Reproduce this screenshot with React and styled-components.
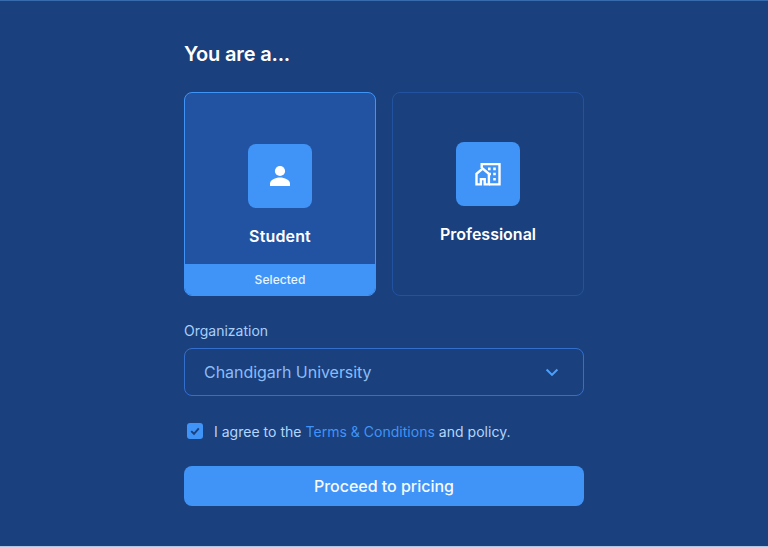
import React from "react";
import styled, { createGlobalStyle } from "styled-components";

const GlobalStyle = createGlobalStyle`
  * { box-sizing: border-box; }
  body { margin: 0; background: #1a407d; font-family: Inter, sans-serif; }
`;

const Page = styled.main`
  height: 547px;
  padding-top: 39px;
  display: flex;
  justify-content: center;
  background: #1a407d;
  border-top: 1px solid #386bae;
  border-bottom: 1px solid #b4c6e2;
`;

const Form = styled.form`
  width: 400px;
  display: flex;
  flex-direction: column;
`;

const Title = styled.h1`
  margin: 0;
  font-size: 20px;
  line-height: 28px;
  font-weight: 600;
  letter-spacing: -0.18px;
  color: #fff;
`;

const Cards = styled.div`
  display: grid;
  grid-template-columns: 1fr 1fr;
  gap: 16px;
  margin-top: 24px;
`;

const Card = styled.div`
  height: 204px;
  display: flex;
  flex-direction: column;
  border: 1px solid ${(p) => (p.$selected ? "#4094f7" : "#2253a0")};
  border-radius: 8px;
  background: ${(p) => (p.$selected ? "#2253a2" : "transparent")};
  overflow: hidden;
`;

const CardBody = styled.div`
  flex: 1;
  display: flex;
  flex-direction: column;
  align-items: center;
  padding-top: ${(p) => (p.$selected ? 51 : 49)}px;
`;

const IconTile = styled.div`
  width: 64px;
  height: 64px;
  display: grid;
  place-items: center;
  border-radius: 8px;
  background: #4094f7;
  svg { display: block; }
`;

const CardLabel = styled.div`
  margin-top: 16px;
  font-size: 16px;
  line-height: 24px;
  font-weight: 600;
  letter-spacing: ${(p) => (p.$wide ? "0.15px" : "0")};
  color: #fff;
`;

const SelectedBar = styled.div`
  height: 31px;
  line-height: 31px;
  text-align: center;
  font-size: 12px;
  font-weight: 500;
  letter-spacing: 0.08px;
  color: #eaf4ff;
  background: #4094f7;
`;

const FieldLabel = styled.label`
  margin-top: 24px;
  padding-top: 1px;
  font-size: 14px;
  line-height: 20px;
  color: #a9cffb;
`;

const Select = styled.div`
  height: 48px;
  margin-top: 7px;
  padding: 0 19px;
  display: flex;
  align-items: center;
  justify-content: space-between;
  border: 1px solid #356fcd;
  border-radius: 8px;
  font-size: 16px;
  letter-spacing: -0.04px;
  color: #8abcf8;
`;

const Agreement = styled.div`
  margin-top: 25px;
  padding-left: 3px;
  height: 20px;
  display: flex;
  align-items: center;
  gap: 11px;
  font-size: 14px;
  line-height: 20px;
  color: #b5d6fc;
`;

const AgreementText = styled.span`
  padding-top: 1px;
  letter-spacing: 0.02px;
`;

const Checkbox = styled.span`
  width: 16px;
  height: 16px;
  border-radius: 3px;
  background: #4094f7;
  svg { display: block; }
`;

const TermsLink = styled.a`
  color: #4094f7;
`;

const Submit = styled.button`
  height: 40px;
  margin-top: 25px;
  padding: 0;
  border: 0;
  border-radius: 8px;
  background: #4094f7;
  color: #f5faff;
  font: 500 16px/40px Inter, sans-serif;
  letter-spacing: -0.02px;
`;

const PersonIcon = () => (
  <svg width="30" height="30" viewBox="0 0 30 30" fill="#fff">
    <circle cx="15" cy="10" r="5.1" />
    <path d="M5 25v-2.6C5 18.8 10.5 16.4 15 16.4s10 2.4 10 6V25z" />
  </svg>
);

const BuildingIcon = () => (
  <svg width="32" height="32" viewBox="0 0 32 32" fill="none" stroke="#fff" strokeWidth="2.4">
    <path d="M9.7 10V6.1h17.8v20.3H17" />
    <path d="M4.5 26.4V15.8l6.2-5.2 6.2 5.2v10.6h-4.2v-5.3H8.9v5.3z" />
    <path d="M16 10.9h2.6M21.2 10.9h2.6M17.2 16h1.8M21.2 16h2.6M21.2 21.2h2.6" strokeWidth="2.6" />
  </svg>
);

const Chevron = () => (
  <svg width="24" height="24" viewBox="0 0 24 24" fill="none" stroke="#4ba0fb" strokeWidth="2.1">
    <path d="M6.6 9.6l5.4 5.3 5.4-5.3" />
  </svg>
);

const Check = () => (
  <svg width="16" height="16" viewBox="0 0 16 16" fill="none" stroke="#1a407d" strokeWidth="1.9">
    <path d="M4.2 8.1l2.8 2.7 4.8-5.4" />
  </svg>
);

export default function App() {
  return (
    <>
      <GlobalStyle />
      <Page>
        <Form>
          <Title>You are a...</Title>
          <Cards>
            <Card $selected>
              <CardBody $selected>
                <IconTile><PersonIcon /></IconTile>
                <CardLabel $wide>Student</CardLabel>
              </CardBody>
              <SelectedBar>Selected</SelectedBar>
            </Card>
            <Card>
              <CardBody>
                <IconTile><BuildingIcon /></IconTile>
                <CardLabel>Professional</CardLabel>
              </CardBody>
            </Card>
          </Cards>
          <FieldLabel>Organization</FieldLabel>
          <Select>
            <span>Chandigarh University</span>
            <Chevron />
          </Select>
          <Agreement>
            <Checkbox><Check /></Checkbox>
            <AgreementText>
              I agree to the <TermsLink>Terms &amp; Conditions</TermsLink> and policy.
            </AgreementText>
          </Agreement>
          <Submit type="button">Proceed to pricing</Submit>
        </Form>
      </Page>
    </>
  );
}
